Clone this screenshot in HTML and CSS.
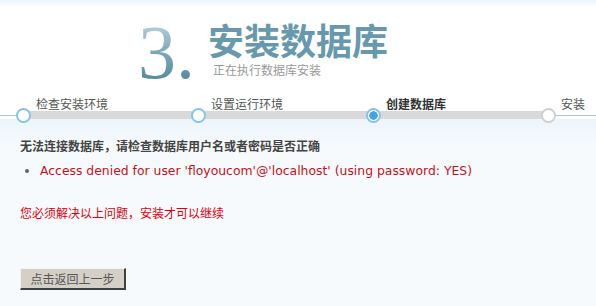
FILE: index.html
```html
<!DOCTYPE html>
<html lang="zh-CN">
<head>
    <meta charset="UTF-8">
    <title>安装数据库</title>
    <link rel="stylesheet" href="styles.css">
</head>
<body>
    <div class="header">
        <div class="brand">
            <span class="num">3.</span>
            <div class="titles">
                <h1>安装数据库</h1>
                <p class="subtitle">正在执行数据库安装</p>
            </div>
        </div>
        <div class="progress">
            <div class="steps">
                <div class="step done"><span class="label">检查安装环境</span><i class="dot"></i></div>
                <div class="step done"><span class="label">设置运行环境</span><i class="dot"></i></div>
                <div class="step current"><span class="label">创建数据库</span><i class="dot"></i></div>
                <div class="step todo"><span class="label">安装</span><i class="dot"></i></div>
            </div>
        </div>
    </div>

    <div class="content">
        <p class="error-title">无法连接数据库，请检查数据库用户名或者密码是否正确</p>
        <ul class="errors">
            <li>Access denied for user 'floyoucom'@'localhost' (using password: YES)</li>
        </ul>
        <p class="notice">您必须解决以上问题，安装才可以继续</p>
        <button class="back" onclick="history.back()">点击返回上一步</button>
    </div>
</body>
</html>
```

FILE: styles.css
```css
body {
    margin: 0;
    font-family: "Liberation Sans", "Noto Sans CJK SC", sans-serif;
    font-size: 12px;
    color: #444;
    background: linear-gradient(to bottom, #eaf5fb 0, #ffffff 7px, #ffffff 119px, #edf5fb 119px, #f6fafd 150px) no-repeat;
    background-color: #f6fafd;
    min-height: 306px;
}
.brand {
    display: flex;
    align-items: flex-start;
    padding: 14px 0 0 138px;
    height: 70px;
}
.num {
    font-family: "Liberation Serif", serif;
    font-size: 76px;
    line-height: 1;
    background: linear-gradient(to bottom, #b9d2dc 10%, #7ea8ba 50%, #4f8398 95%);
    -webkit-background-clip: text;
    background-clip: text;
    color: transparent;
}
.titles {
    margin: 7px 0 0 13px;
}
h1 {
    margin: 0;
    font-family: "Noto Sans CJK SC", sans-serif;
    font-size: 36px;
    line-height: 36px;
    font-weight: bold;
    color: #6898ac;
}
.subtitle {
    margin: 7px 0 0 5px;
    font-family: "Noto Sans CJK SC", sans-serif;
    font-size: 12px;
    line-height: 12px;
    color: #999;
}
.progress {
    margin-top: 14px;
    padding-left: 16px;
    background:
        linear-gradient(#d9d9d9, #d9d9d9) 23px 13px / 525px 8px no-repeat,
        linear-gradient(#a8c8da, #a8c8da) 0 17px / 100% 1px no-repeat;
}
.steps {
    display: grid;
    grid-template-columns: 175px 175px 175px 1fr;
}
.step .label {
    display: block;
    padding-left: 20px;
    font-family: "Noto Sans CJK SC", sans-serif;
    font-size: 12px;
    line-height: 12px;
    color: #555;
    white-space: nowrap;
}
.step.current .label {
    color: #333;
    font-weight: bold;
}
.dot {
    display: block;
    width: 15px;
    height: 15px;
    margin-top: -2px;
    box-sizing: border-box;
    border: 2px solid #86c3e8;
    border-radius: 50%;
    background: #fff;
}
.step.current .dot {
    background: radial-gradient(circle, #3d9ee0 0, #4aa6e3 4px, #fff 4.5px);
}
.step.todo .dot {
    border-color: #cfcfcf;
}
.content {
    padding: 14px 20px 0;
}
.error-title {
    margin: 0;
    line-height: 18px;
    font-family: "Noto Sans CJK SC", sans-serif;
    font-weight: bold;
    color: #444;
}
.errors {
    margin: 7px 0 0;
    padding-left: 20px;
    line-height: 18px;
}
.errors li {
    font-family: "DejaVu Sans", Verdana, sans-serif;
    font-size: 12.4px;
    color: #c4121b;
}
.errors li::marker {
    color: #666;
}
.notice {
    margin: 24px 0 0;
    line-height: 18px;
    font-family: "Noto Sans CJK SC", sans-serif;
    color: #e0000b;
}
.back {
    margin-top: 46px;
    width: 106px;
    height: 22px;
    padding: 0;
    font-family: "Noto Sans CJK SC", sans-serif;
    font-size: 12px;
    color: #555;
    background-color: #d4d0c8;
    border-style: solid;
    border-width: 1px 2px 2px 1px;
    border-color: #f4f3ef #404040 #404040 #f4f3ef;
    cursor: pointer;
}
```
